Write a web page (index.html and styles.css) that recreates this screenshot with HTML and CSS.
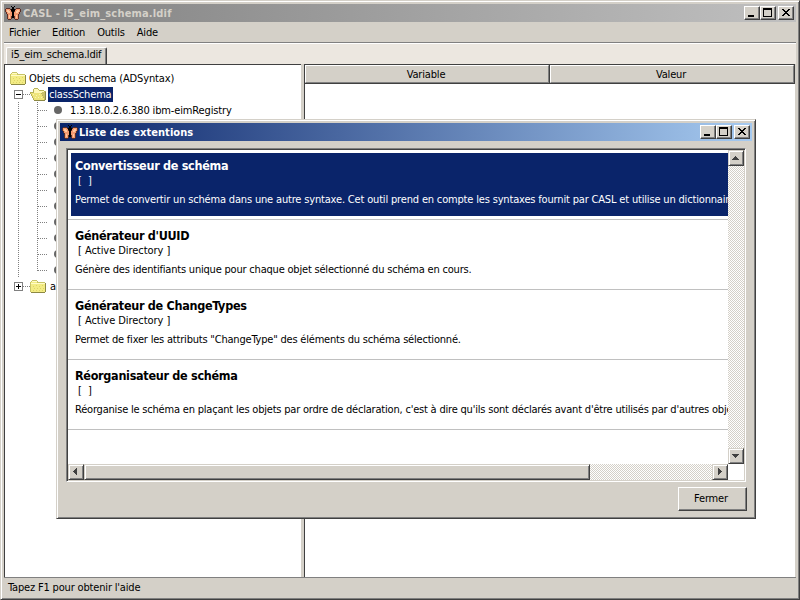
FILE: index.html
```html
<!DOCTYPE html>
<html lang="fr">
<head>
<meta charset="utf-8">
<title>CASL - i5_eim_schema.ldif</title>
<link rel="stylesheet" href="styles.css">
</head>
<body>
<svg width="0" height="0" class="defs">
  <defs>
    <symbol id="butterfly" viewBox="0 0 16 16">
      <path fill="#5a3028" d="M1 3h4v1h1v1h1v2h2V5h1V4h1V3h4v1h1v3h-1v2h-1v5h-1v1h-3v-1H9v-2H7v2H6v1H3v-1H2V9H1V7H0V4h1z"/>
      <path fill="#f49a70" d="M1 4h4v1h1v2h1v4H6v3H3V9H2V7H1zM15 4h-4v1h-1v2H9v4h1v3h3V9h1V7h1z"/>
      <path fill="#ffc8a0" d="M2 5h2v1h1v2H3V7H2zM12 5h2v2h-1v1h-2V6h1zM4 10h1v3H4zM11 10h1v3h-1z"/>
      <path fill="#000" d="M6 1h1v1H6zM9 1h1v1H9zM7 2h2v11H7zM6 4h4v2H6z"/>
    </symbol>
    <symbol id="folder" viewBox="0 0 16 13">
      <path fill="#c8c468" d="M1 1h1V0h5v1h1v1h7v1h1v9h-1v1H1v-1H0V2h1z"/>
      <path fill="#f3ec84" d="M1 2h6v1h8v9H1z"/>
      <path fill="#fffbc8" d="M2 1h5v1H2zM1 3h14v1H1z"/>
      <path fill="#ddd36a" d="M3 6h1v1H3zM6 5h1v1H6zM9 6h1v1H9zM12 5h1v1h-1zM4 8h1v1H4zM7 8h1v1H7zM10 8h1v1h-1zM13 8h1v1h-1zM3 10h1v1H3zM6 10h1v1H6zM9 10h1v1H9zM12 10h1v1h-1z"/>
      <path fill="#8c8844" d="M15 3h1v9h-1v1H1v-1h14z"/>
    </symbol>
    <symbol id="folder-open" viewBox="0 0 16 13">
      <path fill="#b8b258" d="M3 1h1V0h4v1h1v1h5v1h2v9h-1v1H4v-1H3v-2H2V8H1V6H0V4h3z"/>
      <path fill="#fff8b8" d="M4 1h4v1h1v1h5v2H4z"/>
      <path fill="#c9c06a" d="M12 4h3v7h-1V9h-1V7h-1z"/>
      <path fill="#eee47a" d="M1 5h10v1h1v2h1v2h1v2H4v-2H3V8H2V6H1z"/>
      <path fill="#fbf6ae" d="M3 6h1v1H3zM6 7h1v1H6zM9 6h1v1H9zM5 9h1v1H5zM8 9h1v1H8zM11 9h1v1h-1z"/>
      <path fill="#8c8844" d="M15 4h1v8h-1v1H4v-1h11z"/>
    </symbol>
    <symbol id="min" viewBox="0 0 16 14"><path fill="#000" d="M4 9h6v2H4z"/></symbol>
    <symbol id="max" viewBox="0 0 16 14"><path fill="#000" fill-rule="evenodd" d="M3 2h9v9H3zM4 4h7v6H4z"/></symbol>
    <symbol id="close" viewBox="0 0 16 14"><path fill="#000" d="M4 3h2v1h1v1h2V4h1V3h2v1h-1v1h-1v1H9v1h1v1h1v1h1v1h-2V9H9V8H7v1H6v1H4V9h1V8h1V7h1V6H6V5H5V4H4z"/></symbol>
  </defs>
</svg>
<div class="window">
  <header class="titlebar inactive">
    <svg class="app-icon"><use href="#butterfly"/></svg>
    <h1 class="title t-main">CASL - i5_eim_schema.ldif</h1>
    <div class="controls">
      <button class="ctl"><svg><use href="#min"/></svg></button>
      <button class="ctl"><svg><use href="#max"/></svg></button>
      <button class="ctl ctl-close"><svg><use href="#close"/></svg></button>
    </div>
  </header>
  <nav class="menu"><span>Fichier</span><span>Edition</span><span>Outils</span><span>Aide</span></nav>
  <div class="tabs"><div class="tab">i5_eim_schema.ldif</div></div>
  <main class="split">
    <div class="tree">
      <div class="row"><svg class="folder"><use href="#folder"/></svg><span class="label root">Objets du schema (ADSyntax)</span></div>
      <div class="row lvl1"><i class="toggle"></i><i class="dash"></i><svg class="folder"><use href="#folder-open"/></svg><span class="label selected">classSchema</span></div>
      <div class="children">
        <div class="row leaf"><i class="dash"></i><i class="dot"></i><span class="label">1.3.18.0.2.6.380 ibm-eimRegistry</span></div>
        <div class="row leaf"><i class="dash"></i><i class="dot"></i></div>
        <div class="row leaf"><i class="dash"></i><i class="dot"></i></div>
        <div class="row leaf"><i class="dash"></i><i class="dot"></i></div>
        <div class="row leaf"><i class="dash"></i><i class="dot"></i></div>
        <div class="row leaf"><i class="dash"></i><i class="dot"></i></div>
        <div class="row leaf"><i class="dash"></i><i class="dot"></i></div>
        <div class="row leaf"><i class="dash"></i><i class="dot"></i></div>
        <div class="row leaf"><i class="dash"></i><i class="dot"></i></div>
        <div class="row leaf"><i class="dash"></i><i class="dot"></i></div>
        <div class="row leaf"><i class="dash"></i><i class="dot"></i></div>
      </div>
      <div class="row lvl1"><i class="toggle plus"></i><i class="dash"></i><svg class="folder"><use href="#folder"/></svg><span class="label">a</span></div>
    </div>
    <div class="table">
      <div class="thead"><div class="th">Variable</div><div class="th">Valeur</div></div>
    </div>
  </main>
  <footer class="status">Tapez F1 pour obtenir l'aide</footer>
</div>

<section class="dialog">
  <header class="titlebar active">
    <svg class="app-icon"><use href="#butterfly"/></svg>
    <h2 class="title t-dialog">Liste des extentions</h2>
    <div class="controls">
      <button class="ctl"><svg><use href="#min"/></svg></button>
      <button class="ctl"><svg><use href="#max"/></svg></button>
      <button class="ctl ctl-close"><svg><use href="#close"/></svg></button>
    </div>
  </header>
  <div class="listbox">
    <div class="list">
      <article class="item chosen"><h3>Convertisseur de schéma</h3><p class="kind">[&nbsp; ]</p><p class="desc long">Permet de convertir un schéma dans une autre syntaxe. Cet outil prend en compte les syntaxes fournit par CASL et utilise un dictionnaire</p></article>
      <article class="item"><h3>Générateur d'UUID</h3><p class="kind">[ Active Directory ]</p><p class="desc">Génère des identifiants unique pour chaque objet sélectionné du schéma en cours.</p></article>
      <article class="item"><h3>Générateur de ChangeTypes</h3><p class="kind">[ Active Directory ]</p><p class="desc">Permet de fixer les attributs "ChangeType" des éléments du schéma sélectionné.</p></article>
      <article class="item"><h3>Réorganisateur de schéma</h3><p class="kind">[&nbsp; ]</p><p class="desc">Réorganise le schéma en plaçant les objets par ordre de déclaration, c'est à dire qu'ils sont déclarés avant d'être utilisés par d'autres objets</p></article>
    </div>
    <div class="vbar">
      <div class="arrow"><svg viewBox="0 0 16 16"><path fill="#404040" d="M7 6h1v1h1v1h1v1h1v1H4V9h1V8h1V7h1z"/></svg></div>
      <div class="arrow"><svg viewBox="0 0 16 16"><path fill="#404040" d="M4 6h7v1h-1v1H9v1H8v1H7V9H6V8H5V7H4z"/></svg></div>
    </div>
    <div class="hbar">
      <div class="arrow"><svg viewBox="0 0 16 16"><path fill="#404040" d="M9 4v7H8v-1H7V9H6V8H5V7h1V6h1V5h1V4z"/></svg></div>
      <div class="thumb"></div>
      <div class="arrow right"><svg viewBox="0 0 16 16"><path fill="#404040" d="M6 4v7h1v-1h1V9h1V8h1V7H9V6H8V5H7V4z"/></svg></div>
    </div>
  </div>
  <div class="actions"><button class="push">Fermer</button></div>
</section>
</body>
</html>
```

FILE: styles.css
```css
* { box-sizing: border-box; margin: 0; padding: 0; }
body {
  width: 800px; height: 600px; overflow: hidden; position: relative;
  background: #d4d0c8; color: #000;
  font: 11px/16px "DejaVu Sans Condensed", "DejaVu Sans", Tahoma, sans-serif;
  letter-spacing: -0.17px; white-space: nowrap;
}
svg { display: block; shape-rendering: crispEdges; flex: none; }
.defs { position: absolute; }
.window {
  width: 800px; height: 600px; padding: 3px;
  display: flex; flex-direction: column;
  border: 1px solid; border-color: #d4d0c8 #404040 #404040 #d4d0c8;
  box-shadow: inset 1px 1px #fff, inset -1px -1px #808080;
}
.titlebar { height: 18px; display: flex; align-items: center; padding: 0 2px 0 1px; flex: none; }
.inactive { background: linear-gradient(90deg, #808080, #c0c0c0); color: #d4d0c8; }
.active { background: linear-gradient(90deg, #0a246a, #a6caf0); color: #fff; padding-left: 2px; }
.app-icon { width: 16px; height: 16px; }
.title { font-size: 11px; line-height: 18px; font-weight: bold; margin-left: 2px; padding-top: 1px; flex: 1; }
.t-main { letter-spacing: 0.17px; }
.t-dialog { letter-spacing: 0.06px; margin-left: 1px; }
.controls { display: flex; }
.ctl {
  width: 16px; height: 14px; border: 1px solid; border-color: #fff #404040 #404040 #fff;
  box-shadow: inset -1px -1px #808080; background: #d4d0c8;
}
.ctl svg { width: 16px; height: 14px; margin: -1px; }
.ctl-close { margin-left: 2px; }
.menu { height: 20px; display: flex; gap: 12px; padding: 1px 5px 0; line-height: 20px; flex: none; }
.tabs {
  height: 22px; flex: none; display: flex; align-items: flex-end; padding-left: 2px;
  border-top: 1px solid #808080; box-shadow: inset 0 1px #fff; background: #ece7e0;
}
.tab {
  width: 101px; height: 17px; line-height: 14px; padding-left: 4px; background: #d4d0c8;
  border: 1px solid; border-color: #fff #404040 transparent #fff; border-bottom: 0;
  border-radius: 2px 2px 0 0; box-shadow: inset -1px 0 #808080; letter-spacing: -0.24px;
}
.split { flex: 1; display: flex; min-height: 0; border-bottom: 1px solid #808080; }
.tree {
  width: 297px; background: #fff; border: 1px solid #404040; border-width: 1px 0 0 1px;
  padding: 5px 0 0 5px;
}
.row { height: 16px; display: flex; align-items: center; }
.folder { width: 16px; height: 13px; }
.label { line-height: 15px; padding: 0 2px; margin-left: 2px; }
.root { margin-left: 1px; letter-spacing: -0.14px; }
.lvl1 { padding-left: 4px; }
.toggle {
  width: 9px; height: 9px; border: 1px solid #808080;
  background: linear-gradient(#000, #000) center / 5px 1px no-repeat #fff;
}
.plus { background: linear-gradient(#000, #000) center / 5px 1px no-repeat, linear-gradient(#000, #000) center / 1px 5px no-repeat, #fff; }
.dash { height: 1px; width: 7px; background: repeating-linear-gradient(90deg, #808080 0 1px, #fff 1px 2px); }
.selected { background: #0a246a; color: #fff; padding: 0 1px; }
.children {
  margin-left: 8px; padding-left: 20px;
  background:
    repeating-linear-gradient(#808080 0 1px, #fff 1px 2px) 0 0 / 1px 100% no-repeat,
    repeating-linear-gradient(#808080 0 1px, #fff 1px 2px) 19px 0 / 1px 169px no-repeat;
}
.leaf .dash { width: 9px; }
.dot { width: 8px; height: 8px; border-radius: 50%; background: #666; margin-left: 7px; }
.leaf .label { margin-left: 6px; letter-spacing: -0.14px; }
.table {
  flex: 1; margin: 0 1px 0 3px; background: #fff;
  border: 1px solid #404040; border-width: 1px 0 0 1px;
}
.thead { display: flex; border-bottom: 1px solid #404040; height: 19px; border-right: 1px solid #404040; }
.th {
  flex: 1; background: #d4d0c8; text-align: center; line-height: 17px; padding-right: 2px;
  border: 1px solid; border-color: #fff #808080 #808080 #fff;
}
.th + .th { box-shadow: -1px 0 #404040; margin-left: 1px; }
.status { height: 18px; line-height: 20px; padding-left: 4px; flex: none; }

.dialog {
  position: absolute; left: 56px; top: 119px; width: 700px; height: 400px;
  background: #d4d0c8; padding: 3px;
  border: 1px solid; border-color: #d4d0c8 #404040 #404040 #d4d0c8;
  box-shadow: inset 1px 1px #fff, inset -1px -1px #808080;
}
.listbox {
  margin: 7px 6px 0; width: 680px; height: 334px; background: #fff;
  border: 1px solid; border-color: #808080 #fff #fff #808080;
  box-shadow: inset 1px 1px #404040, inset -1px -1px #d4d0c8;
  padding: 1px; display: grid; grid-template: 314px 16px / 660px 16px;
}
.list { overflow: hidden; }
.item { height: 70px; border-bottom: 1px solid #c0c0c0; padding: 3px 0 3px 3px; }
.item h3 { font-size: 12.5px; line-height: 16px; letter-spacing: -0.3px; padding: 5px 0 0 4px; }
.kind { line-height: 14px; padding-left: 7px; letter-spacing: -0.05px; }
.desc { line-height: 16px; padding: 4px 0 8px 4px; letter-spacing: -0.2px; }
.long { letter-spacing: -0.17px; }
.chosen { color: #fff; background: #0a246a content-box; }
.vbar, .hbar { background: repeating-conic-gradient(#fff 0 25%, #d4d0c8 0 50%) 0 0 / 2px 2px; display: flex; }
.vbar { flex-direction: column; justify-content: space-between; }
.arrow, .thumb {
  width: 16px; height: 16px; background: #d4d0c8; border: 1px solid;
  border-color: #d4d0c8 #404040 #404040 #d4d0c8;
  box-shadow: inset 1px 1px #fff, inset -1px -1px #808080;
}
.arrow svg { width: 16px; height: 16px; margin: -1px; }
.thumb { width: 506px; }
.right { margin-left: auto; }
.actions { display: flex; justify-content: flex-end; padding: 5px 5px 0; }
.push {
  width: 69px; height: 24px; font: inherit; letter-spacing: inherit; padding-right: 3px; background: #d4d0c8;
  border: 1px solid; border-color: #fff #404040 #404040 #fff; box-shadow: inset -1px -1px #808080;
}
```
